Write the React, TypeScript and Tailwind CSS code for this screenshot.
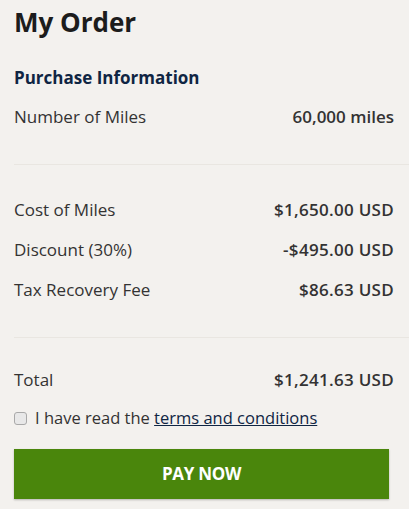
export default function App() {
  return (
    <div className="min-h-[509px] bg-[#f3f1ee] pl-[14px] pt-[4px] text-[#333] font-['Open_Sans',sans-serif]">
      <h1 className="text-[26px] font-bold leading-[36px] text-[#1c1c1c]">My Order</h1>
      <h2 className="mt-[26px] text-[17px] font-bold leading-[24px] text-[#0f2543]">Purchase Information</h2>
      <div className="mt-[15px] flex items-center justify-between pr-[15px] text-[17px] leading-[24px]">
        <span>Number of Miles</span>
        <span className="font-semibold">60,000 miles</span>
      </div>
      <div className="mt-[35px] h-px bg-[#e9e6e1]" />
      <div className="mt-[33px] flex flex-col gap-[16px] pr-[15px] text-[17px] leading-[24px]">
        <div className="flex items-center justify-between">
          <span>Cost of Miles</span>
          <span className="font-semibold tracking-[0.3px]">$1,650.00 USD</span>
        </div>
        <div className="flex items-center justify-between">
          <span>Discount (30%)</span>
          <span className="font-semibold tracking-[0.3px]">-$495.00 USD</span>
        </div>
        <div className="flex items-center justify-between">
          <span>Tax Recovery Fee</span>
          <span className="font-semibold tracking-[0.3px]">$86.63 USD</span>
        </div>
      </div>
      <div className="mt-[35px] h-px bg-[#e9e6e1]" />
      <div className="mt-[30px] flex items-center justify-between pr-[15px] text-[17px] leading-[24px]">
        <span>Total</span>
        <span className="font-semibold tracking-[0.3px]">$1,241.63 USD</span>
      </div>
      <label className="mt-[14px] flex items-center gap-[8px] text-[16.5px] leading-[24px]">
        <span className="h-[13px] w-[13px] rounded-[3px] border border-[#a9a9a9] bg-[#e8e8e8]" />
        <span>
          I have read the{" "}
          <a href="#" className="text-[#0f2543] underline">terms and conditions</a>
        </span>
      </label>
      <div className="mr-[20px] mt-[19px]">
        <button className="h-[50px] w-full bg-[#4a860c] text-[17px] font-bold tracking-[-0.3px] text-white shadow-[0_1px_2px_rgba(0,0,0,0.25)]">
          PAY NOW
        </button>
      </div>
    </div>
  );
}
